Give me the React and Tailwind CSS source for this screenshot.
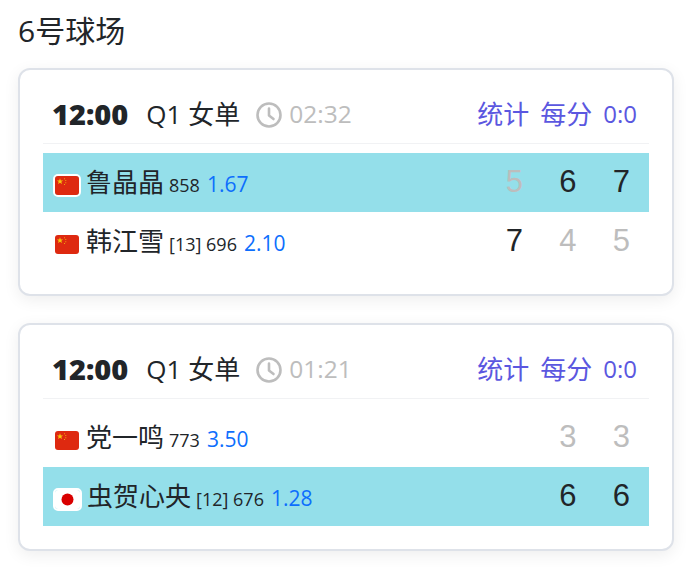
const font = "[font-family:'Open_Sans','Noto_Sans_CJK_SC',sans-serif]";

function CnFlag() {
  return (
    <svg viewBox="0 0 24 19" preserveAspectRatio="none" className="w-[28px] h-[23px] mt-[6px] rounded-[5px] border-2 border-white shrink-0 box-border">
      <rect width="24" height="19" fill="#de2910" />
      <polygon points="5,2.2 5.8,4.4 8.2,4.4 6.3,5.8 7,8.1 5,6.7 3,8.1 3.7,5.8 1.8,4.4 4.2,4.4" fill="#f6c90e" />
      <circle cx="9.5" cy="2.7" r="0.5" fill="#f6c90e" />
      <circle cx="10.8" cy="4.5" r="0.5" fill="#f6c90e" />
      <circle cx="10.8" cy="6.7" r="0.5" fill="#f6c90e" />
      <circle cx="9.5" cy="8.5" r="0.5" fill="#f6c90e" />
    </svg>
  );
}

function JpFlag() {
  return (
    <svg viewBox="0 0 25 19" preserveAspectRatio="none" className="w-[29px] h-[23px] mt-[6px] rounded-[5px] border-2 border-white shrink-0 box-border">
      <rect width="25" height="19" fill="#ffffff" />
      <circle cx="12.5" cy="9.5" r="6" fill="#d90000" />
    </svg>
  );
}

function Clock() {
  return (
    <svg viewBox="0 0 26 26" className="w-[26px] h-[26px] mt-[2px] shrink-0" fill="none" stroke="#bdbdbd" strokeWidth="2.6" strokeLinecap="round" strokeLinejoin="round">
      <circle cx="13" cy="13" r="11.5" />
      <path d="M13 6.5V13.5L17.5 17" />
    </svg>
  );
}

function Player({ flag, name, seed, rank, odds, scores, won }) {
  return (
    <div className={`flex items-center justify-between h-[59px] pl-[10px] pr-[1px] ${won ? "bg-[#94dfea]" : ""}`}>
      <div className="flex items-center">
        {flag === "jp" ? <JpFlag /> : <CnFlag />}
        <span className="ml-[5px] text-[26px] text-[#212529]">{name}</span>
        <span className="ml-[5px] text-[18px] text-[#212529] mt-[5px]">{seed ? `[${seed}] ` : ""}{rank}</span>
        <span className="ml-[7px] text-[21px] text-[#0d6efd] mt-[4px]">{odds}</span>
      </div>
      <div className="flex items-center [font-family:'Liberation_Sans',sans-serif] text-[31px]">
        {scores.map((s, i) => (
          <span key={i} className={`w-[53.5px] text-center ${s.on ? "text-[#212529]" : "text-[#bdbdbd]"}`}>{s.v}</span>
        ))}
      </div>
    </div>
  );
}

function Match({ clock, players }) {
  return (
    <div className="bg-white border-2 border-[#dee2e9] rounded-[12px] px-[23px] pt-[16px] pb-[23px] shadow-[0_4px_16px_rgba(0,0,0,0.07)]">
      <div className="flex items-center justify-between h-[58px] pb-[1px] border-b border-[#f1f2f4] mb-[9px]">
        <div className="flex items-center pl-[9px]">
          <span className="text-[29px] font-black text-[#212529]">12:00</span>
          <span className="ml-[18px] text-[26px] text-[#212529]">Q1 女单</span>
          <span className="ml-[16px]"><Clock /></span>
          <span className="ml-[7px] text-[24.5px] text-[#bdbdbd]">{clock}</span>
        </div>
        <div className="flex items-center text-[#5b57e0] text-[26px] pr-[12px]">
          <span>统计</span>
          <span className="ml-[11px]">每分</span>
          <span className="ml-[11px] text-[24px]">0:0</span>
        </div>
      </div>
      {players.map((p, i) => <Player key={i} {...p} />)}
    </div>
  );
}

export default function App() {
  return (
    <div className={`min-h-[576px] bg-white px-[18px] pt-[10px] ${font}`}>
      <h2 className="text-[30px] leading-[42px] text-[#212529]">6号球场</h2>
      <div className="flex flex-col gap-[27px] mt-[16px] pr-[2px]">
        <Match
          clock="02:32"
          players={[
            { name: "鲁晶晶", rank: 858, odds: "1.67", won: true, scores: [{ v: 5 }, { v: 6, on: true }, { v: 7, on: true }] },
            { name: "韩江雪", seed: 13, rank: 696, odds: "2.10", scores: [{ v: 7, on: true }, { v: 4 }, { v: 5 }] },
          ]}
        />
        <Match
          clock="01:21"
          players={[
            { name: "党一鸣", rank: 773, odds: "3.50", scores: [{ v: "" }, { v: 3 }, { v: 3 }] },
            { name: "虫贺心央", flag: "jp", seed: 12, rank: 676, odds: "1.28", won: true, scores: [{ v: "" }, { v: 6, on: true }, { v: 6, on: true }] },
          ]}
        />
      </div>
    </div>
  );
}
